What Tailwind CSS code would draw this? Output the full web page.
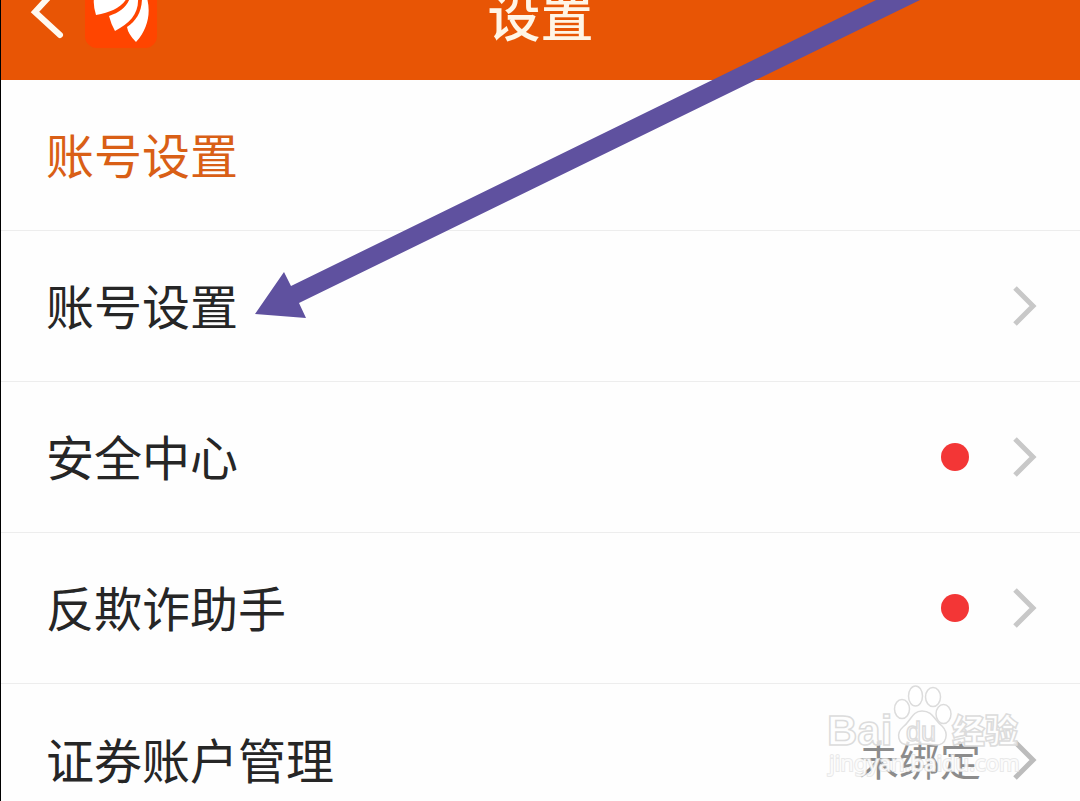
<!DOCTYPE html>
<html lang="zh-CN">
<head>
<meta charset="utf-8">
<meta name="viewport" content="width=device-width, initial-scale=1">
<title>设置</title>
<script src="https://cdn.jsdelivr.net/npm/@tailwindcss/browser@4"></script>
</head>
<body class="relative h-screen overflow-hidden border-l border-black bg-[#fefefe] font-['Noto_Sans_CJK_SC',sans-serif] text-[#262626]">
<header class="grid h-20 grid-cols-[1fr_auto_1fr] grid-rows-[48px] items-end overflow-hidden bg-[#e85505]">
  <div class="flex items-end gap-5 pl-7">
    <button type="button" aria-label="返回">
      <svg class="block h-12 w-9" viewBox="0 0 36 48" fill="none" stroke="#fffaf0" stroke-width="6" stroke-linecap="round" stroke-linejoin="miter" aria-hidden="true"><path d="M30 -14 6 12 31 35"/></svg>
    </button>
    <svg class="block h-12 w-[72px]" viewBox="0 0 72 48" aria-hidden="true">
      <rect y="-24" width="72" height="72" rx="12" fill="#ff4500"/>
      <g fill="#fff"><path d="M9 -2Q8 6 11 15C26 12 36 8 42 -2Z"/><path d="M45 -2C41 8 35 12 24 16Q26 24 30 31C45 23 54 14 53 -2Z"/><path d="M57 -2C57 12 51 21 42 27Q43 34 51 42C63 29 66 13 62 -2Z"/></g>
    </svg>
  </div>
  <h1 class="mb-1 text-[53px] leading-[60px] font-medium text-[#fff5e6]">设置</h1>
</header>
<main class="text-[48px] leading-[72px]">
  <h2 class="flex h-[151px] items-center border-b border-[#ededed] px-[45px] pb-1 text-[#d95f16]">账号设置</h2>
  <nav aria-label="账号设置">
    <a href="#account" class="flex h-[151px] items-center justify-between border-b border-[#ededed] pr-[43px] pl-[45px]">
      <span class="pb-1">账号设置</span>
      <svg class="h-10 w-6" viewBox="0 0 24 40" fill="none" stroke="#c8c8c8" stroke-width="5" aria-hidden="true"><path d="M2 2 20 20 2 38"/></svg>
    </a>
    <a href="#security" class="flex h-[151px] items-center border-b border-[#ededed] pr-[43px] pl-[45px]">
      <span class="grow pb-1">安全中心</span>
      <span class="mr-11 size-7 rounded-full bg-[#f33636]"></span>
      <svg class="h-10 w-6" viewBox="0 0 24 40" fill="none" stroke="#c8c8c8" stroke-width="5" aria-hidden="true"><path d="M2 2 20 20 2 38"/></svg>
    </a>
    <a href="#fraud" class="flex h-[151px] items-center border-b border-[#ededed] pr-[43px] pl-[45px]">
      <span class="grow pb-1">反欺诈助手</span>
      <span class="mr-11 size-7 rounded-full bg-[#f33636]"></span>
      <svg class="h-10 w-6" viewBox="0 0 24 40" fill="none" stroke="#c8c8c8" stroke-width="5" aria-hidden="true"><path d="M2 2 20 20 2 38"/></svg>
    </a>
    <a href="#securities" class="flex h-[151px] items-center pr-[43px] pl-[45px]">
      <span class="grow pb-1">证券账户管理</span>
      <span class="mr-8 pb-1 text-[41px] text-[#8c8c8c]">未绑定</span>
      <svg class="h-10 w-6" viewBox="0 0 24 40" fill="none" stroke="#bcbcbc" stroke-width="5" aria-hidden="true"><path d="M2 2 20 20 2 38"/></svg>
    </a>
  </nav>
</main>
<svg class="pointer-events-none absolute top-0 left-0 h-80 w-[930px]" viewBox="1 0 930 320" fill="#5f519f" aria-hidden="true"><path d="M255 314 284 272 291 286 876 0H920L299 303 306 318Z"/></svg>
<svg class="pointer-events-none absolute right-[50px] bottom-5 h-24 w-[210px]" viewBox="820 685 210 96" fill="#fff" fill-opacity=".7" stroke="#dcdcdc" stroke-width="1.5" aria-label="Baidu经验">
  <g><ellipse cx="902" cy="709" rx="7.5" ry="9.5"/><ellipse cx="915.5" cy="696" rx="7" ry="10"/><ellipse cx="933" cy="697" rx="7.5" ry="9.5"/><ellipse cx="943.5" cy="714" rx="7.5" ry="9.5"/>
  <path d="M922 711C912 711 911 721 903 727C896 733 897 745 909 745Q915 744 922 744T936 745C947 745 949 733 942 726C934 720 933 711 922 711Z"/></g>
  <g font-family="Liberation Sans, sans-serif"><text x="827" y="745" font-size="42" font-weight="700">Bai</text><text x="906" y="741" font-size="27">du</text></g>
  <text x="952" y="743" font-family="Noto Sans CJK SC, sans-serif" font-size="33" font-weight="900">经验</text>
  <text x="829" y="771" font-family="Noto Sans, sans-serif" font-size="22" fill-opacity=".85" stroke="#e4e4e4" stroke-opacity=".8" stroke-width="2" paint-order="stroke">jingyan.baidu.com</text>
</svg>
</body>
</html>
